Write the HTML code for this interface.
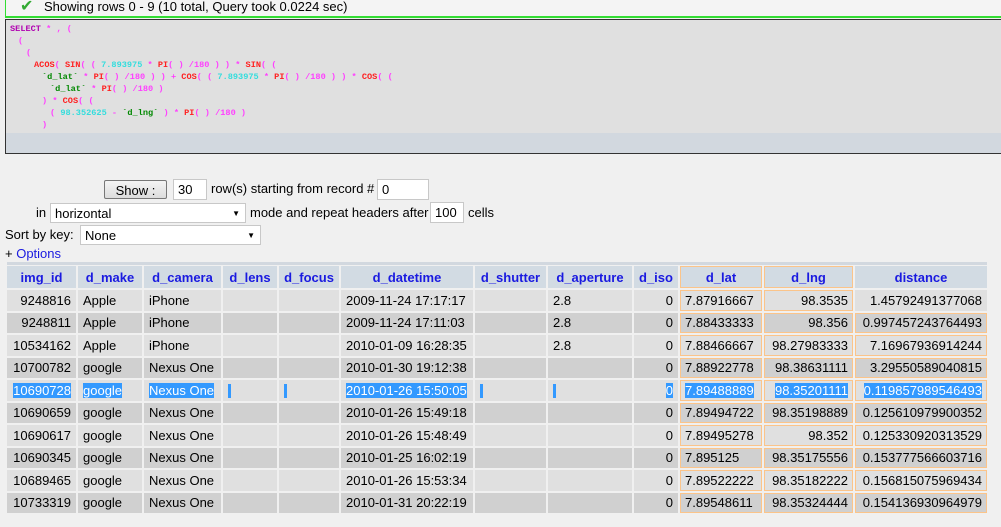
<!DOCTYPE html>
<html><head><meta charset="utf-8"><style>
body{margin:0;width:1001px;height:527px;background:#f0f0f0;font-family:"Liberation Sans",sans-serif;font-size:13px;color:#000;position:relative;overflow:hidden}
.top{position:absolute;left:5px;top:-2px;width:1000px;height:18px;border:1px solid #33dd33;border-top:none;border-bottom:2px solid #33dd33;background:#f4f4f4;font-size:13px;line-height:18px}
.sql{position:absolute;left:5px;top:19px;width:1000px;height:133px;border:1px solid #333;border-right:none;background:#e0e0e0;font-family:"Liberation Mono",monospace;font-size:8.6px;font-weight:bold}
.sql .bot{position:absolute;left:0;right:0;bottom:0;height:20px;background:#d2d8df}
.sql div.l{position:absolute;white-space:pre;line-height:10px}
.k{color:#b000b0}.f{color:#ff2020}.p{color:#ff40ff}.n{color:#33dddd}.c{color:#008800}
.inp{position:absolute;background:#fff;border:1px solid #c8c8c8;height:19px;line-height:19px;padding-left:4px;box-sizing:border-box}
.t{position:absolute;line-height:16px}
table{position:absolute;left:5px;top:264px;border-collapse:separate;border-spacing:2px;table-layout:fixed}
td,th{height:20.5px;padding:0 5px;white-space:nowrap;overflow:hidden}
th{background:#d2dbe3;color:#1a1ae0;font-weight:bold;height:22px;text-align:center}
tr.a td{background:#e0e0e0}tr.b td{background:#d0d0d0}
.r{text-align:right}
.o{box-shadow:inset 0 0 0 1px #fbc48a}
.s{background:#3399ff;color:#fff}
.bar{display:inline-block;width:3px;height:14px;background:#3399ff;vertical-align:middle}
</style></head><body>
<div class="top"><span style="position:absolute;left:14px;top:0;color:#3a3;font-size:16px">✔</span><span style="position:absolute;left:38px">Showing rows 0 - 9 (10 total, Query took 0.0224 sec)</span></div>
<div class="sql">
<div class="l" style="left:4px;top:4px"><span class="k">SELECT</span> <span class="p">* , (</span></div>
<div class="l" style="left:12px;top:16px"><span class="p">(</span></div>
<div class="l" style="left:20px;top:28px"><span class="p">(</span></div>
<div class="l" style="left:28px;top:40px"><span class="f">ACOS</span><span class="p">( </span><span class="f">SIN</span><span class="p">( ( </span><span class="n">7.893975</span><span class="p"> * </span><span class="f">PI</span><span class="p">( ) /180 ) ) * </span><span class="f">SIN</span><span class="p">( (</span></div>
<div class="l" style="left:36px;top:52px"><span class="c">`d_lat`</span><span class="p"> * </span><span class="f">PI</span><span class="p">( ) /180 ) ) + </span><span class="f">COS</span><span class="p">( ( </span><span class="n">7.893975</span><span class="p"> * </span><span class="f">PI</span><span class="p">( ) /180 ) ) * </span><span class="f">COS</span><span class="p">( (</span></div>
<div class="l" style="left:44px;top:64px"><span class="c">`d_lat`</span><span class="p"> * </span><span class="f">PI</span><span class="p">( ) /180 )</span></div>
<div class="l" style="left:36px;top:76px"><span class="p">) * </span><span class="f">COS</span><span class="p">( (</span></div>
<div class="l" style="left:44px;top:88px"><span class="p">( </span><span class="n">98.352625</span><span class="p"> - </span><span class="c">`d_lng`</span><span class="p"> ) * </span><span class="f">PI</span><span class="p">( ) /180 )</span></div>
<div class="l" style="left:36px;top:100px"><span class="p">)</span></div>
<div class="bot"></div>
</div>
<div class="inp" style="left:104px;top:180px;width:63px;background:linear-gradient(#f4f4f4,#dcdcdc);border-color:#777;border-radius:2px;text-align:center;padding:0">Show :</div>
<div class="inp" style="left:173px;top:179px;width:34px;height:21px">30</div>
<div class="t" style="left:211px;top:181px">row(s) starting from record #</div>
<div class="inp" style="left:377px;top:179px;width:52px;height:21px">0</div>
<div class="t" style="left:36px;top:205px">in</div>
<div class="inp" style="left:50px;top:203px;width:196px;height:20px">horizontal<span style="position:absolute;right:5px;font-size:8px">▼</span></div>
<div class="t" style="left:250px;top:205px">mode and repeat headers after</div>
<div class="inp" style="left:430px;top:202px;width:34px;height:21px">100</div>
<div class="t" style="left:468px;top:205px">cells</div>
<div class="t" style="left:5px;top:227px">Sort by key:</div>
<div class="inp" style="left:80px;top:225px;width:181px;height:20px">None<span style="position:absolute;right:5px;font-size:8px">▼</span></div>
<div class="t" style="left:5px;top:246px"><span>+</span> <span style="color:#1a1ae0">Options</span></div>
<div style="position:absolute;left:7px;top:262px;width:980px;height:3px;background:#d2d8df"></div>
<table>
<colgroup><col style="width:69px"><col style="width:64px"><col style="width:77px"><col style="width:54px"><col style="width:60px"><col style="width:132px"><col style="width:71px"><col style="width:84px"><col style="width:44px"><col style="width:82px"><col style="width:89px"><col style="width:132px"></colgroup>
<tr><th>img_id</th><th>d_make</th><th>d_camera</th><th>d_lens</th><th>d_focus</th><th>d_datetime</th><th>d_shutter</th><th>d_aperture</th><th>d_iso</th><th class="o">d_lat</th><th class="o">d_lng</th><th>distance</th></tr>
<tr class="a"><td class="r">9248816</td><td>Apple</td><td>iPhone</td><td></td><td></td><td>2009-11-24 17:17:17</td><td></td><td>2.8</td><td class="r">0</td><td class="o">7.87916667</td><td class="o r">98.3535</td><td class="r">1.45792491377068</td></tr>
<tr class="b"><td class="r">9248811</td><td>Apple</td><td>iPhone</td><td></td><td></td><td>2009-11-24 17:11:03</td><td></td><td>2.8</td><td class="r">0</td><td class="o">7.88433333</td><td class="o r">98.356</td><td class="o r">0.997457243764493</td></tr>
<tr class="a"><td class="r">10534162</td><td>Apple</td><td>iPhone</td><td></td><td></td><td>2010-01-09 16:28:35</td><td></td><td>2.8</td><td class="r">0</td><td class="o">7.88466667</td><td class="o r">98.27983333</td><td class="o r">7.16967936914244</td></tr>
<tr class="b"><td class="r">10700782</td><td>google</td><td>Nexus One</td><td></td><td></td><td>2010-01-30 19:12:38</td><td></td><td></td><td class="r">0</td><td class="o">7.88922778</td><td class="o r">98.38631111</td><td class="o r">3.29550589040815</td></tr>
<tr class="a"><td class="r"><span class="s">10690728</span></td><td><span class="s">google</span></td><td><span class="s">Nexus One</span></td><td><span class="bar"></span></td><td><span class="bar"></span></td><td><span class="s">2010-01-26 15:50:05</span></td><td><span class="bar"></span></td><td><span class="bar"></span></td><td class="r"><span class="s">0</span></td><td class="o"><span class="s">7.89488889</span></td><td class="o r"><span class="s">98.35201111</span></td><td class="o r"><span class="s">0.119857989546493</span></td></tr>
<tr class="b"><td class="r">10690659</td><td>google</td><td>Nexus One</td><td></td><td></td><td>2010-01-26 15:49:18</td><td></td><td></td><td class="r">0</td><td class="o">7.89494722</td><td class="o r">98.35198889</td><td class="o r">0.125610979900352</td></tr>
<tr class="a"><td class="r">10690617</td><td>google</td><td>Nexus One</td><td></td><td></td><td>2010-01-26 15:48:49</td><td></td><td></td><td class="r">0</td><td class="o">7.89495278</td><td class="o r">98.352</td><td class="o r">0.125330920313529</td></tr>
<tr class="b"><td class="r">10690345</td><td>google</td><td>Nexus One</td><td></td><td></td><td>2010-01-25 16:02:19</td><td></td><td></td><td class="r">0</td><td class="o">7.895125</td><td class="o r">98.35175556</td><td class="o r">0.153777566603716</td></tr>
<tr class="a"><td class="r">10689465</td><td>google</td><td>Nexus One</td><td></td><td></td><td>2010-01-26 15:53:34</td><td></td><td></td><td class="r">0</td><td class="o">7.89522222</td><td class="o r">98.35182222</td><td class="o r">0.156815075969434</td></tr>
<tr class="b"><td class="r">10733319</td><td>google</td><td>Nexus One</td><td></td><td></td><td>2010-01-31 20:22:19</td><td></td><td></td><td class="r">0</td><td class="o">7.89548611</td><td class="o r">98.35324444</td><td class="o r">0.154136930964979</td></tr>
</table>
</body></html>
